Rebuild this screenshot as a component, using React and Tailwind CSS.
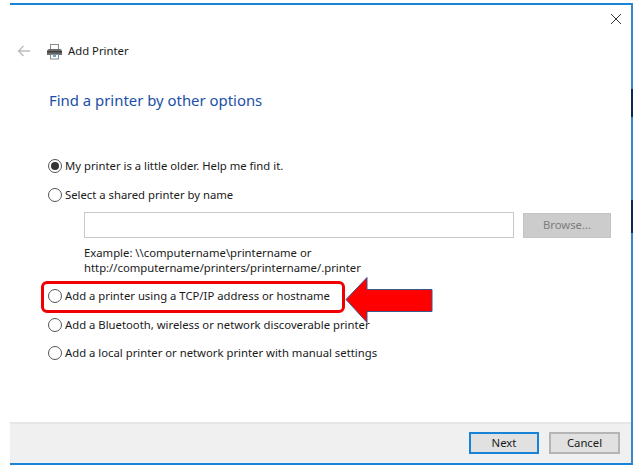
import React from "react";

function Radio({ checked, label }) {
  return (
    <label className="flex items-center h-5 text-[11.3px] text-[#1a1a1a]">
      <span className="flex items-center justify-center w-[14px] h-[14px] rounded-full border border-[#555] mr-[3px] shrink-0">
        {checked && <span className="w-[8px] h-[8px] rounded-full bg-[#333]" />}
      </span>
      <span className="whitespace-nowrap">{label}</span>
    </label>
  );
}

function PrinterIcon() {
  return (
    <svg width="17" height="17" viewBox="0 0 17 17">
      <rect x="4.5" y="1.5" width="8" height="5" fill="#fff" stroke="#8a8a8a" />
      <path d="M1 8.5 Q1 6 3 6 H14 Q16 6 16 8.5 V12 H1 Z" fill="#6b6b6b" />
      <rect x="1" y="8" width="15" height="1.5" fill="#3f3f3f" />
      <rect x="4.5" y="11.5" width="8" height="4.5" fill="#fff" stroke="#8a8a8a" />
      <rect x="7" y="12" width="3" height="2" fill="#5aa7de" />
    </svg>
  );
}

export default function App() {
  return (
    <div className="relative w-[641px] h-[471px] bg-white overflow-hidden pt-[3px] font-['Noto_Sans','Open_Sans',sans-serif]">
      <div className="ml-[10px] w-[623px] h-[462px] flex flex-col border-t-2 border-t-[#1883d7] border-r-2 border-r-[#3a87c8] border-b-2 border-b-[#1883d7]">
        {/* title area */}
        <div className="flex justify-end h-[29px] pr-[9px] pt-[8px]">
          <svg width="12" height="12" viewBox="0 0 12 12" stroke="#333" strokeWidth="1" fill="none">
            <path d="M1 1 L11 11 M11 1 L1 11" />
          </svg>
        </div>

        <div className="flex-1 flex flex-col">
          <div className="flex items-center h-[20px] mt-[7px]">
            <svg className="ml-[7px]" width="14" height="12" viewBox="0 0 14 12" stroke="#bdbdbd" strokeWidth="1.4" fill="none">
              <path d="M13 6 H1.5 M6.5 1 L1.5 6 L6.5 11" />
            </svg>
            <span className="ml-[15px]"><PrinterIcon /></span>
            <span className="ml-[5px] text-[11.3px] text-[#1a1a1a]">Add Printer</span>
          </div>

          <h1 className="ml-[39px] mt-[27px] text-[14.9px] leading-[24px] font-normal text-[#1b4fa8]">
            Find a printer by other options
          </h1>

          <div className="ml-[38px] mt-[44px] flex flex-col">
            <Radio checked label="My printer is a little older. Help me find it." />
            <div className="mt-[9px]"><Radio label="Select a shared printer by name" /></div>

            <div className="flex mt-[7px] ml-[36px]">
              <div className="w-[430px] h-[26px] border border-[#c8c8c8] bg-white" />
              <button className="ml-[9px] mt-px w-[88px] h-[25px] bg-[#cccccc] border border-[#c4c4c4] text-[11.3px] text-[#7d7d7d]">
                Browse...
              </button>
            </div>

            <p className="ml-[36px] mt-[7px] text-[11.3px] leading-[15px] text-[#1a1a1a]">
              Example: \\computername\printername or
              <br />
              http://computername/printers/printername/.printer
            </p>

            <div className="mt-[11px]"><Radio label="Add a printer using a TCP/IP address or hostname" /></div>
            <div className="mt-[9px]"><Radio label="Add a Bluetooth, wireless or network discoverable printer" /></div>
            <div className="mt-[8px]"><Radio label="Add a local printer or network printer with manual settings" /></div>
          </div>
        </div>

        {/* footer */}
        <div className="h-[41px] bg-[#f0f0f0] border-t-2 border-t-[#e6e6e6] flex items-start justify-end pt-[8px] pr-[11px] gap-[10px]">
          <button className="w-[70px] h-[22px] bg-[#e1e1e1] border-2 border-[#1883d7] text-[11.3px] text-[#1a1a1a]">
            Next
          </button>
          <button className="w-[71px] h-[22px] bg-[#e1e1e1] border-2 border-[#b5b5b5] text-[11.3px] text-[#1a1a1a]">
            Cancel
          </button>
        </div>
      </div>

      {/* red callout */}
      <div className="absolute left-[41px] top-[281px] w-[304px] h-[32px] rounded-[6px] border-[3px] border-[#f00000]" />
      <svg className="absolute left-[344px] top-[276px]" width="90" height="48" viewBox="0 0 90 48">
        <path d="M2 23.5 L23 1.5 V13.5 H88 V35.5 H23 V46.5 Z" fill="#ff0000" stroke="#3a5a8c" strokeWidth="1" />
      </svg>

      {/* dark slivers on the right edge */}
      <div className="absolute left-[631px] top-[89px] w-[2px] h-[28px] bg-[#0a2a55]" />
      <div className="absolute left-[631px] top-[200px] w-[2px] h-[33px] bg-[#0a2a55]" />
    </div>
  );
}
